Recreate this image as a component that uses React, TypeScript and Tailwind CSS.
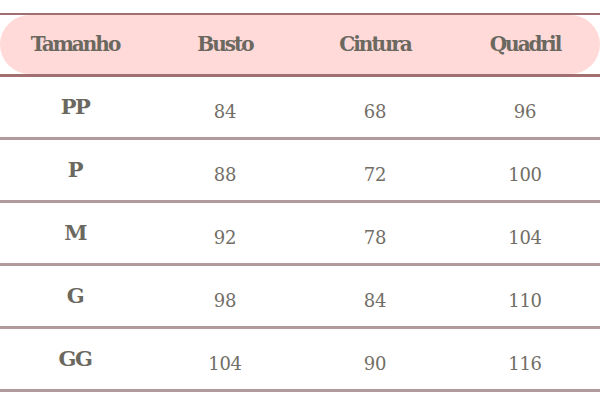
import React from "react";

const rows = [
  ["PP", "84", "68", "96"],
  ["P", "88", "72", "100"],
  ["M", "92", "78", "104"],
  ["G", "98", "84", "110"],
  ["GG", "104", "90", "116"],
];

const headers = ["Tamanho", "Busto", "Cintura", "Quadril"];

export default function App() {
  return (
    <div className="w-[600px] h-[400px] bg-white pt-[13px] text-[#6b685f]" style={{ fontFamily: '"DejaVu Serif", "Liberation Serif", serif' }}>
      <div className="border-t-[2px] border-b-[3px] border-[#a26f70]">
        <div className="grid grid-cols-4 h-[59px] items-center bg-[#ffdad9] rounded-[30px]">
          {headers.map((h) => (
            <div key={h} className="text-center text-[20px] font-bold tracking-[-2px] pb-[1px]">
              {h}
            </div>
          ))}
        </div>
      </div>
      {rows.map((r) => (
        <div key={r[0]} className="grid grid-cols-4 h-[63px] items-center border-b-[3px] border-[#b09a9b]">
          <div className="text-center text-[21px] font-bold tracking-[-1.5px] pb-[1px]">{r[0]}</div>
          {r.slice(1).map((v, i) => (
            <div key={i} className="text-center text-[18px] tracking-[-0.3px] pt-[8px] text-[#716e66]">{v}</div>
          ))}
        </div>
      ))}
    </div>
  );
}
